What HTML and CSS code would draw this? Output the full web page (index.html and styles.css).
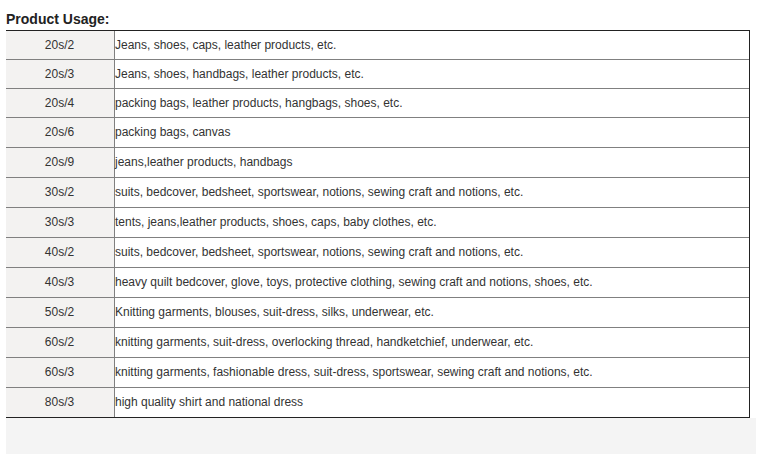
FILE: index.html
```html
<!DOCTYPE html>
<html>
<head>
<meta charset="utf-8">
<link rel="stylesheet" href="styles.css">
</head>
<body>
<div class="page">
  <div class="title">Product Usage:</div>
  <div class="table">
    <div class="row short"><div class="spec">20s/2</div><div class="use">Jeans, shoes, caps, leather products, etc.</div></div>
    <div class="row short"><div class="spec">20s/3</div><div class="use">Jeans, shoes, handbags, leather products, etc.</div></div>
    <div class="row short"><div class="spec">20s/4</div><div class="use">packing bags, leather products, hangbags, shoes, etc.</div></div>
    <div class="row"><div class="spec">20s/6</div><div class="use">packing bags, canvas</div></div>
    <div class="row"><div class="spec">20s/9</div><div class="use">jeans,leather products, handbags</div></div>
    <div class="row"><div class="spec">30s/2</div><div class="use">suits, bedcover, bedsheet, sportswear, notions, sewing craft and notions, etc.</div></div>
    <div class="row"><div class="spec">30s/3</div><div class="use">tents, jeans,leather products, shoes, caps, baby clothes, etc.</div></div>
    <div class="row"><div class="spec">40s/2</div><div class="use">suits, bedcover, bedsheet, sportswear, notions, sewing craft and notions, etc.</div></div>
    <div class="row"><div class="spec">40s/3</div><div class="use">heavy quilt bedcover, glove, toys, protective clothing, sewing craft and notions, shoes, etc.</div></div>
    <div class="row"><div class="spec">50s/2</div><div class="use">Knitting garments, blouses, suit-dress, silks, underwear, etc.</div></div>
    <div class="row"><div class="spec">60s/2</div><div class="use">knitting garments, suit-dress, overlocking thread, handketchief, underwear, etc.</div></div>
    <div class="row"><div class="spec">60s/3</div><div class="use">knitting garments, fashionable dress, suit-dress, sportswear, sewing craft and notions, etc.</div></div>
    <div class="row last"><div class="spec">80s/3</div><div class="use">high quality shirt and national dress</div></div>
  </div>
  <div class="footer"></div>
</div>
</body>
</html>
```
FILE: styles.css
```css
html, body {
  margin: 0;
  padding: 0;
  background: #ffffff;
}
body {
  font-family: "Liberation Sans", Arial, sans-serif;
  color: #333333;
}
.page {
  padding-left: 6px;
  width: 750px;
}
.title {
  font-size: 14px;
  font-weight: bold;
  line-height: 16px;
  color: #222222;
  padding-top: 11px;
  box-sizing: border-box;
  height: 30px;
}
.table {
  width: 744px;
  box-sizing: border-box;
  border-top: 1px solid #222222;
  border-right: 1px solid #222222;
  border-bottom: 1px solid #222222;
}
.row {
  display: flex;
  height: 30px;
  border-bottom: 1px solid #808080;
  box-sizing: border-box;
}
.row.short {
  height: 29px;
}
.row.last {
  border-bottom: none;
  height: 29px;
}
.spec {
  width: 107px;
  flex: none;
  background: #f3f2f1;
  border-right: 1px solid #808080;
  padding-bottom: 1px;
  padding-right: 1px;
  display: flex;
  align-items: center;
  justify-content: center;
  font-size: 12px;
}
.use {
  flex: 1;
  display: flex;
  align-items: center;
  padding-bottom: 1px;
  font-size: 12px;
  white-space: nowrap;
}
.footer {
  width: 750px;
  height: 36px;
  background: #f4f4f4;
}
```
